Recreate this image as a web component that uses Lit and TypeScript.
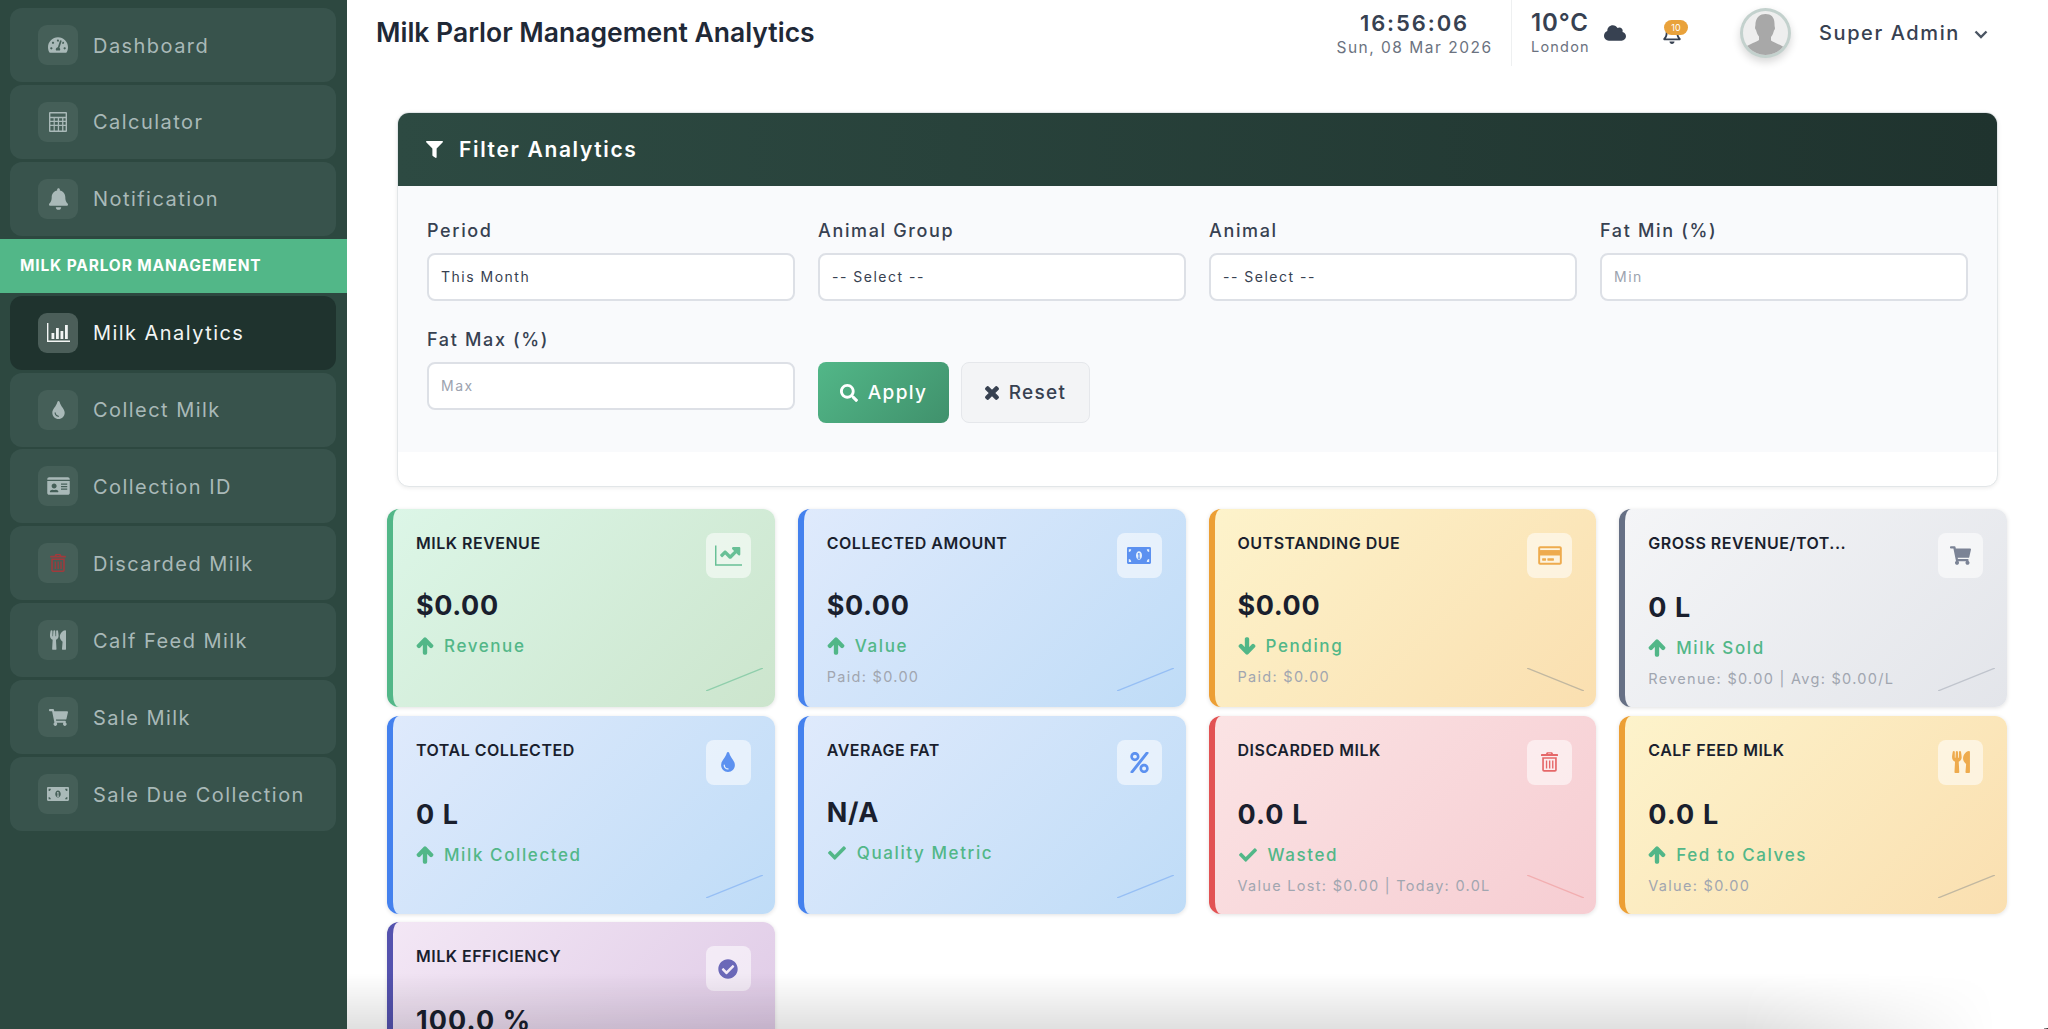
import { LitElement, html, css, svg } from "lit";
import { customElement } from "lit/decorators.js";

const P: Record<string, [string, any]> = {
  gauge: ["0 0 576 512", svg`<path d="M288 32C128.94 32 0 160.94 0 320c0 52.8 14.25 102.26 39.06 144.8 5.61 9.62 16.3 15.2 27.44 15.2h443c11.14 0 21.83-5.58 27.44-15.2C561.75 422.26 576 372.8 576 320c0-159.06-128.94-288-288-288zm0 64c14.71 0 26.58 10.13 30.32 23.65-1.11 2.26-2.64 4.23-3.45 6.67l-9.22 27.67c-5.13 3.49-10.97 6.01-17.64 6.01-17.67 0-32-14.33-32-32S270.33 96 288 96zM96 384c-17.67 0-32-14.33-32-32s14.33-32 32-32 32 14.33 32 32-14.33 32-32 32zm48-160c-17.67 0-32-14.33-32-32s14.33-32 32-32 32 14.33 32 32-14.33 32-32 32zm246.77-72.41l-61.33 184C343.13 347.33 352 364.54 352 384c0 11.72-3.38 22.55-8.88 32H232.88c-5.5-9.45-8.88-20.28-8.88-32 0-33.94 26.5-61.43 59.9-63.59l61.34-184.01c4.17-12.56 17.73-19.45 30.36-15.17 12.57 4.19 19.35 17.79 15.17 30.36zm14.66 57.2l15.52-46.55c3.47-1.29 7.13-2.23 11.05-2.23 17.67 0 32 14.33 32 32s-14.33 32-32 32c-11.38-.01-20.89-6.28-26.57-15.22zM480 384c-17.67 0-32-14.33-32-32s14.33-32 32-32 32 14.33 32 32-14.33 32-32 32z"/>`],
  calc: ["0 0 18 20", svg`<path fill-rule="evenodd" d="M1 0h16a1 1 0 0 1 1 1v18a1 1 0 0 1-1 1H1a1 1 0 0 1-1-1V1a1 1 0 0 1 1-1zm.4 1.4v3.4h15.2V1.4zm0 4.8v2.6h3.2V6.2zm4.4 0v2.6h3V6.2zm4.3 0v2.6h3V6.2zm4.3 0v2.6h2.2V6.2zM1.4 10v2.7h3.2V10zm4.4 0v2.7h3V10zm4.3 0v2.7h3V10zm4.3 0v2.7h2.2V10zM1.4 13.9v4.7h3.2v-4.7zm4.4 0v4.7h3v-4.7zm4.3 0v4.7h3v-4.7zm4.3 0v4.7h2.2v-4.7z"/>`],
  bell: ["0 0 448 512", svg`<path d="M224 512c35.32 0 63.97-28.65 63.97-64H160.03c0 35.35 28.65 64 63.97 64zm215.39-149.71c-19.32-20.76-55.47-51.99-55.47-154.29 0-77.7-54.48-139.9-127.94-155.16V32c0-17.67-14.32-32-31.98-32s-31.98 14.33-31.98 32v20.84C118.56 68.1 64.08 130.3 64.08 208c0 102.3-36.15 133.53-55.47 154.29-6 6.45-8.66 14.16-8.61 21.71.11 16.4 12.98 32 32.1 32h383.8c19.12 0 32-15.6 32.1-32 .05-7.55-2.61-15.27-8.61-21.71z"/>`],
  bars: ["0 0 23 19", svg`<path d="M0 0h1.4v17.4H23V19H0z"/><rect x="4.5" y="10" width="2.8" height="6"/><rect x="9" y="5" width="2.8" height="11"/><rect x="13.5" y="8" width="2.8" height="8"/><rect x="18" y="2" width="2.8" height="14"/>`],
  tint: ["0 0 352 512", svg`<path d="M205.22 22.09c-7.94-28.78-49.44-30.12-58.44 0C100.01 179.85 0 222.72 0 333.91 0 432.35 78.72 512 176 512s176-79.65 176-178.09c0-111.75-99.79-153.34-146.78-311.82zM176 448c-61.75 0-112-50.25-112-112 0-8.84 7.16-16 16-16s16 7.16 16 16c0 44.11 35.89 80 80 80 8.84 0 16 7.16 16 16s-7.16 16-16 16z"/>`],
  idcard: ["0 0 576 512", svg`<path d="M528 32H48C21.5 32 0 53.5 0 80v16h576V80c0-26.5-21.5-48-48-48zM0 432c0 26.5 21.5 48 48 48h480c26.5 0 48-21.5 48-48V128H0v304zm352-232c0-4.4 3.6-8 8-8h144c4.4 0 8 3.6 8 8v16c0 4.4-3.6 8-8 8H360c-4.4 0-8-3.6-8-8v-16zm0 64c0-4.4 3.6-8 8-8h144c4.4 0 8 3.6 8 8v16c0 4.4-3.6 8-8 8H360c-4.4 0-8-3.6-8-8v-16zm0 64c0-4.4 3.6-8 8-8h144c4.4 0 8 3.6 8 8v16c0 4.4-3.6 8-8 8H360c-4.4 0-8-3.6-8-8v-16zM176 192c35.3 0 64 28.7 64 64s-28.7 64-64 64-64-28.7-64-64 28.7-64 64-64zM67.1 396.2C75.5 370.5 99.6 352 128 352h8.2c12.3 5.1 25.7 8 39.8 8s27.6-2.9 39.8-8h8.2c28.4 0 52.5 18.5 60.9 44.2 3.2 9.9-5.2 19.8-15.6 19.8H82.7c-10.4 0-18.8-10-15.6-19.8z"/>`],
  trash: ["0 0 448 512", svg`<path fill-rule="evenodd" d="M32 128h384v336a48 48 0 0 1-48 48H80a48 48 0 0 1-48-48zm44 44v292a4 4 0 0 0 4 4h288a4 4 0 0 0 4-4V172zm52 44h36v208h-36zm82 0h36v208h-36zm82 0h36v208h-36zM16 48h112l26-48h140l26 48h112a16 16 0 0 1 16 16v32H0V64a16 16 0 0 1 16-16zm164 0h88l-10-18h-68z"/>`],
  utensils: ["0 0 416 512", svg`<path d="M207.9 15.2c.8 4.7 16.1 94.5 16.1 128.8 0 52.3-27.8 89.6-68.9 104.6L168 486.7c.7 13.7-10.2 25.3-24 25.3H80c-13.7 0-24.7-11.5-24-25.3l12.9-238.1C27.7 233.6 0 196.2 0 144 0 109.6 15.3 19.9 16.1 15.2 19.3-5.1 61.4-5.4 64 16.3v141.2c1.3 3.4 15.1 3.2 16 0 1.4-25.3 7.9-139.2 8-141.8 3.3-20.8 44.7-20.8 47.9 0 .2 2.7 6.6 116.5 8 141.8.9 3.2 14.8 3.4 16 0V16.3c2.6-21.6 44.8-21.4 48-1.1zm119.2 285.7l-15 185.1c-1.2 14 9.9 26 23.9 26h56c13.3 0 24-10.7 24-24V24c0-13.2-10.7-24-24-24-82.5 0-221.4 178.5-64.9 300.9z"/>`],
  cart: ["0 0 576 512", svg`<path d="M528.12 301.319l47.273-208C578.806 78.301 567.391 64 551.99 64H159.208l-9.166-44.81C147.758 8.021 137.93 0 126.529 0H24C10.745 0 0 10.745 0 24v16c0 13.255 10.745 24 24 24h69.883l70.248 343.435C147.325 417.1 136 435.222 136 456c0 30.928 25.072 56 56 56s56-25.072 56-56c0-15.674-6.447-29.835-16.824-40h209.647C430.447 426.165 424 440.326 424 456c0 30.928 25.072 56 56 56s56-25.072 56-56c0-22.172-12.888-41.332-31.579-50.405l5.517-24.276c3.413-15.018-8.002-29.319-23.403-29.319H218.117l-6.545-32h293.145c11.206 0 20.92-7.754 23.403-18.681z"/>`],
  money: ["0 64 640 384", svg`<path d="M608 64H32C14.33 64 0 78.33 0 96v320c0 17.67 14.33 32 32 32h576c17.67 0 32-14.33 32-32V96c0-17.67-14.33-32-32-32zM48 400v-64c35.35 0 64 28.65 64 64H48zm0-224v-64h64c0 35.35-28.65 64-64 64zm272 176c-44.19 0-80-42.99-80-96 0-53.02 35.82-96 80-96s80 42.98 80 96c0 53.03-35.83 96-80 96zm272 48h-64c0-35.35 28.65-64 64-64v64zm0-224c-35.35 0-64-28.65-64-64h64v64z"/><path d="M304 200h32v104h16v24h-64v-24h16v-72h-16v-16z"/>`],
  line: ["0 0 512 512", svg`<path d="M512 420H28V64H0v384h512zM464 96H345.94c-21.38 0-32.09 25.85-16.97 40.97l32.4 32.4L288 242.75l-73.37-73.37c-12.5-12.5-32.76-12.5-45.25 0l-68.69 68.69c-6.25 6.25-6.25 16.38 0 22.63l22.62 22.62c6.25 6.25 16.38 6.25 22.63 0L192 237.25l73.37 73.37c12.5 12.5 32.76 12.5 45.25 0l96-96 32.4 32.4c15.12 15.12 40.97 4.41 40.97-16.97V112c.01-8.84-7.16-16-15.99-16z"/>`],
  card: ["0 0 576 512", svg`<path d="M527.9 32H48.1C21.5 32 0 53.5 0 80v352c0 26.5 21.5 48 48.1 48h479.8c26.6 0 48.1-21.5 48.1-48V80c0-26.5-21.5-48-48.1-48zM54.1 80h467.8c3.3 0 6 2.7 6 6v42H48.1V86c0-3.3 2.7-6 6-6zm467.8 352H54.1c-3.3 0-6-2.7-6-6V256h479.8v170c0 3.3-2.7 6-6 6zM192 332v40c0 6.6-5.4 12-12 12h-72c-6.6 0-12-5.4-12-12v-40c0-6.6 5.4-12 12-12h72c6.6 0 12 5.4 12 12zm192 0v40c0 6.6-5.4 12-12 12H236c-6.6 0-12-5.4-12-12v-40c0-6.6 5.4-12 12-12h136c6.6 0 12 5.4 12 12z"/><rect x="48" y="128" width="480" height="64" />`],
  percent: ["0 0 448 512", svg`<path d="M112 224c61.9 0 112-50.1 112-112S173.9 0 112 0 0 50.1 0 112s50.1 112 112 112zm0-160c26.5 0 48 21.5 48 48s-21.5 48-48 48-48-21.5-48-48 21.5-48 48-48zm224 224c-61.9 0-112 50.1-112 112s50.1 112 112 112 112-50.1 112-112-50.1-112-112-112zm0 160c-26.5 0-48-21.5-48-48s21.5-48 48-48 48 21.5 48 48-21.5 48-48 48zM392 0h32c19 0 30 22 18 38L76 502c-5 6-12 10-20 10H24c-19 0-30-22-18-38L372 10c5-6 12-10 20-10z"/>`],
  ccheck: ["0 0 512 512", svg`<path d="M504 256c0 136.967-111.033 248-248 248S8 392.967 8 256 119.033 8 256 8s248 111.033 248 248zM227.314 387.314l184-184c6.248-6.248 6.248-16.379 0-22.627l-22.627-22.627c-6.248-6.249-16.379-6.249-22.628 0L216 308.118l-70.059-70.059c-6.248-6.248-16.379-6.248-22.628 0l-22.627 22.627c-6.248 6.248-6.248 16.379 0 22.627l104 104c6.249 6.249 16.379 6.249 22.628.001z"/>`],
  up: ["0 0 448 512", svg`<path stroke="currentColor" stroke-width="44" stroke-linejoin="round" d="M34.9 289.5l-22.2-22.2c-9.4-9.4-9.4-24.6 0-33.9L207 39c9.4-9.4 24.6-9.4 33.9 0l194.3 194.3c9.4 9.4 9.4 24.6 0 33.9L413 289.4c-9.5 9.5-25 9.3-34.3-.4L264 168.6V456c0 13.3-10.7 24-24 24h-32c-13.3 0-24-10.7-24-24V168.6L69.2 289.1c-9.3 9.8-24.8 10-34.3.4z"/>`],
  down: ["0 0 448 512", svg`<path stroke="currentColor" stroke-width="44" stroke-linejoin="round" d="M413.1 222.5l22.2 22.2c9.4 9.4 9.4 24.6 0 33.9L241 473c-9.4 9.4-24.6 9.4-33.9 0L12.7 278.6c-9.4-9.4-9.4-24.6 0-33.9l22.2-22.2c9.5-9.5 25-9.3 34.3.4L184 343.4V56c0-13.3 10.7-24 24-24h32c13.3 0 24 10.7 24 24v287.4l114.8-120.5c9.3-9.8 24.8-10 34.3-.4z"/>`],
  check: ["0 0 512 512", svg`<path d="M173.898 439.404l-166.4-166.4c-9.997-9.997-9.997-26.206 0-36.204l36.203-36.204c9.997-9.998 26.207-9.998 36.204 0L192 312.69 432.095 72.596c9.997-9.997 26.207-9.997 36.204 0l36.203 36.204c9.997 9.997 9.997 26.206 0 36.204l-294.4 294.401c-9.998 9.997-26.207 9.997-36.204-.001z"/>`],
  filter: ["0 0 512 512", svg`<path d="M487.976 0H24.028C2.71 0-8.047 25.866 7.058 40.971L192 225.941V432c0 7.831 3.821 15.17 10.237 19.662l80 55.98C298.02 518.69 320 507.493 320 487.98V225.941l184.947-184.97C520.021 25.896 509.338 0 487.976 0z"/>`],
  search: ["0 0 512 512", svg`<path d="M505 442.7L405.3 343c-4.5-4.5-10.6-7-17-7H372c27.6-35.3 44-79.7 44-128C416 93.1 322.9 0 208 0S0 93.1 0 208s93.1 208 208 208c48.3 0 92.7-16.4 128-44v16.3c0 6.4 2.5 12.5 7 17l99.7 99.7c9.4 9.4 24.6 9.4 33.9 0l28.3-28.3c9.4-9.4 9.4-24.6.1-34zM208 336c-70.7 0-128-57.2-128-128 0-70.7 57.2-128 128-128 70.7 0 128 57.2 128 128 0 70.7-57.2 128-128 128z"/>`],
  times: ["0 0 352 512", svg`<path stroke="currentColor" stroke-width="40" stroke-linejoin="round" d="M242.72 256l100.07-100.07c12.28-12.28 12.28-32.19 0-44.48l-22.24-22.24c-12.28-12.28-32.19-12.28-44.48 0L176 189.28 75.93 89.21c-12.28-12.28-32.19-12.28-44.48 0L9.21 111.45c-12.28 12.28-12.28 32.19 0 44.48L109.28 256 9.21 356.07c-12.28 12.28-12.28 32.19 0 44.48l22.24 22.24c12.28 12.28 32.2 12.28 44.48 0L176 322.72l100.07 100.07c12.28 12.28 32.2 12.28 44.48 0l22.24-22.24c12.28-12.28 12.28-32.19 0-44.48L242.72 256z"/>`],
  cloud: ["0 0 640 512", svg`<path d="M537.6 226.6c4.1-10.7 6.4-22.4 6.4-34.6 0-53-43-96-96-96-19.7 0-38.1 6-53.3 16.2C367 64.2 315.3 32 256 32c-88.4 0-160 71.6-160 160 0 2.7.1 5.4.2 8.1C40.2 219.8 0 273.2 0 336c0 79.5 64.5 144 144 144h368c70.7 0 128-57.3 128-128 0-61.9-44-113.6-102.4-125.4z"/>`],
  belloutline: ["0 0 448 512", svg`<path d="M224 512c35.32 0 63.97-28.65 63.97-64H160.03c0 35.35 28.65 64 63.97 64zm215.39-149.71c-19.32-20.76-55.47-51.99-55.47-154.29 0-77.7-54.48-139.9-127.94-155.16V32c0-17.67-14.32-32-31.98-32s-31.98 14.33-31.98 32v20.84C118.56 68.1 64.08 130.3 64.08 208c0 102.3-36.15 133.53-55.47 154.29-6 6.45-8.66 14.16-8.61 21.71.11 16.4 12.98 32 32.1 32h383.8c19.12 0 32-15.6 32.1-32 .05-7.55-2.61-15.27-8.61-21.71zM67.53 368c21.22-27.97 44.42-74.33 44.53-159.42 0-.2-.06-.38-.06-.58 0-61.86 50.14-112 112-112s112 50.14 112 112c0 .2-.06.38-.06.58.11 85.1 23.31 131.46 44.53 159.42H67.53z"/>`],
};

const ic = (n: string, w: number, h: number) => html`<svg class="ic" viewBox=${P[n][0]} style="width:${w}px;height:${h}px" fill="currentColor" preserveAspectRatio=${n === "money" ? "none" : "xMidYMid meet"}>${P[n][1]}</svg>`;

type Nav = { label: string; icon: string; w: number; h: number; active?: boolean; red?: boolean };
const NAV_TOP: Nav[] = [
  { label: "Dashboard", icon: "gauge", w: 20, h: 18 },
  { label: "Calculator", icon: "calc", w: 18, h: 20 },
  { label: "Notification", icon: "bell", w: 19, h: 22 },
];
const NAV_BOTTOM: Nav[] = [
  { label: "Milk Analytics", icon: "bars", w: 23, h: 19, active: true },
  { label: "Collect Milk", icon: "tint", w: 13, h: 18 },
  { label: "Collection ID", icon: "idcard", w: 23, h: 20 },
  { label: "Discarded Milk", icon: "trash", w: 16, h: 18, red: true },
  { label: "Calf Feed Milk", icon: "utensils", w: 16, h: 20 },
  { label: "Sale Milk", icon: "cart", w: 19, h: 17 },
  { label: "Sale Due Collection", icon: "money", w: 22, h: 14 },
];

type Stat = { t: string; v: string; tr?: string; ti?: string; sub?: string; kind: string; icon: string; iw: number; ih: number; flip?: boolean; tall?: boolean };
const STATS: Stat[] = [
  { t: "MILK REVENUE", v: "$0.00", tr: "Revenue", ti: "up", kind: "green", icon: "line", iw: 27, ih: 27 },
  { t: "COLLECTED AMOUNT", v: "$0.00", tr: "Value", ti: "up", sub: "Paid: $0.00", kind: "blue", icon: "money", iw: 24, ih: 17 },
  { t: "OUTSTANDING DUE", v: "$0.00", tr: "Pending", ti: "down", sub: "Paid: $0.00", kind: "amber", icon: "card", iw: 24, ih: 21, flip: true },
  { t: "GROSS REVENUE/TOT...", v: "0 L", tr: "Milk Sold", ti: "up", sub: "Revenue: $0.00 | Avg: $0.00/L", kind: "gray", icon: "cart", iw: 21, ih: 19, tall: true },
  { t: "TOTAL COLLECTED", v: "0 L", tr: "Milk Collected", ti: "up", kind: "blue", icon: "tint", iw: 14, ih: 20, tall: true },
  { t: "AVERAGE FAT", v: "N/A", tr: "Quality Metric", ti: "check", kind: "blue", icon: "percent", iw: 21, ih: 21 },
  { t: "DISCARDED MILK", v: "0.0 L", tr: "Wasted", ti: "check", sub: "Value Lost: $0.00 | Today: 0.0L", kind: "red", icon: "trash", iw: 17, ih: 20, flip: true, tall: true },
  { t: "CALF FEED MILK", v: "0.0 L", tr: "Fed to Calves", ti: "up", sub: "Value: $0.00", kind: "amber", icon: "utensils", iw: 18, ih: 22, tall: true },
  { t: "MILK EFFICIENCY", v: "100.0 %", kind: "purple", icon: "ccheck", iw: 20, ih: 20, tall: true },
];

@customElement("app-root")
export class AppRoot extends LitElement {
  static styles = css`
    :host { display: block; font-family: Inter, "Liberation Sans", sans-serif; }
    * { box-sizing: border-box; }
    .ic { display: block; flex: none; }
    .page { display: flex; width: 100%; height: 1029px; overflow: hidden; background: #fff; position: relative; }
    .side { width: 347px; flex: none; background: #2d4840; padding-top: 8px; display: flex; flex-direction: column; }
    .nav { margin: 0 11px 2.9px 10px; height: 74px; border-radius: 12px; background: #38534c; display: flex; align-items: center; padding-left: 28px; gap: 15px; color: #a9b9b8; font-size: 20px; font-weight: 400; letter-spacing: 1.45px; flex: none; }
    .nav span { position: relative; top: 0.5px; }
    .nav.active { background: #1f332e; color: #f2f5f4; }
    .nav-icon { width: 40px; height: 40px; border-radius: 9px; background: #455f58; display: flex; align-items: center; justify-content: center; }
    .nav.active .nav-icon { background: #4b5e59; }
    .nav-icon.red { color: #a13a3c; }
    .sec { height: 54px; background: #52b788; color: #fff; font-size: 15.5px; font-weight: 700; letter-spacing: 0.85px; display: flex; align-items: center; padding-left: 20px; margin-bottom: 3px; flex: none; }
    .main { flex: 1; min-width: 0; }
    .head { height: 66px; display: flex; align-items: center; padding-left: 29px; }
    .title { font-size: 26.5px; font-weight: 600; color: #1f2937; margin: 0; letter-spacing: 0; flex: 1; line-height: 66px; position: relative; top: -1px; }
    .clock { width: 165px; text-align: center; margin-right: 14px; height: 66px; display: flex; flex-direction: column; align-items: center; }
    .time { font-size: 22px; font-weight: 600; color: #374151; letter-spacing: 1.9px; line-height: 26px; margin-top: 10px; }
    .date { font-size: 15.5px; color: #6b7280; letter-spacing: 1.5px; line-height: 22px; margin-top: 1px; white-space: nowrap; }
    .weather { border-left: 1px solid #eef0f1; height: 66px; padding-left: 19px; display: flex; width: 153px; flex: none; }
    .wt { width: 73px; flex: none; }
    .temp { font-size: 24px; font-weight: 600; color: #374151; line-height: 26px; margin-top: 10px; letter-spacing: 0.9px; }
    .city { font-size: 14.5px; color: #6b7280; letter-spacing: 1.2px; line-height: 22px; margin-top: 0; }
    .cloud { color: #374151; margin-top: 24px; }
    .bell { width: 76px; flex: none; position: relative; height: 66px; color: #374151; }
    .bell .ic { position: absolute; left: -1px; top: 24px; }
    .badge { position: absolute; left: 0; top: 20px; width: 24px; height: 15px; background: #e9a23b; color: #fff; border-radius: 8px; font-size: 9px; line-height: 15px; text-align: center; }
    .avatar { width: 51px; height: 50px; border-radius: 50%; border: 3px solid #c3d1cd; background: #eee; box-shadow: 0 4px 8px rgba(0,0,0,.16); overflow: hidden; flex: none; margin-right: 28px; }
    .avatar svg { display: block; width: 100%; height: 100%; }
    .name { font-size: 20px; font-weight: 500; color: #374151; letter-spacing: 1.6px; width: 155px; flex: none; white-space: nowrap; }
    .chev { width: 74px; flex: none; color: #4b5563; }
    .filter { margin: 46px 50px 0 50px; border: 1px solid #e2e6e8; border-radius: 12px; height: 375px; box-shadow: 0 1px 4px rgba(0,0,0,.08); overflow: hidden; background: #fff; }
    .fh { height: 73px; background: linear-gradient(90deg, #2d4a42, #1f332e); color: #fff; display: flex; align-items: center; padding-left: 28px; gap: 16px; font-size: 21px; font-weight: 600; letter-spacing: 1.65px; }
    .fb { height: 266px; background: #f9fafc; padding: 30px 29px 0 29px; display: grid; grid-template-columns: repeat(4, 368px); column-gap: 23px; row-gap: 24px; align-content: start; }
    .fld label { display: block; font-size: 18px; font-weight: 500; color: #374151; letter-spacing: 1.65px; line-height: 30px; margin-bottom: 7px; }
    .inp { height: 48px; border: 2px solid #dde0e6; border-radius: 8px; background: #fff; padding: 0 0 2px 12px; display: flex; align-items: center; font-size: 14px; letter-spacing: 1.5px; color: #374151; }
    .inp.ph { color: #9ca3af; }
    .btns { display: flex; gap: 12px; grid-column: span 3; padding-top: 37px; }
    .btn { height: 61px; border-radius: 8px; display: flex; align-items: center; justify-content: center; gap: 10px; font-size: 19px; font-weight: 500; letter-spacing: 1.3px; }
    .apply { width: 131px; background: linear-gradient(135deg, #52b788, #40916c); color: #fff; }
    .reset { width: 129px; background: #f3f4f6; border: 1px solid #e5e7eb; color: #374151; }
    .stats { margin: 22px 41px 0 40px; display: grid; grid-template-columns: repeat(4, 1fr); gap: 8.5px 23px; grid-auto-rows: 198px; }
    .stat { position: relative; border-radius: 12px; border-left: 6px solid var(--a); background: linear-gradient(135deg, var(--b1), var(--b2)); box-shadow: 0 1px 4px rgba(0,0,0,.12); padding: 24px 24px 0 23px; }
    .stat.green { --a: #52b788; --b1: #dcf6e7; --b2: #cce5cd; --l: #52b788; }
    .stat.blue { --a: #4481ee; --b1: #dfeafc; --b2: #bfdcf7; --l: #6ba1f2; }
    .stat.amber { --a: #ec9f35; --b1: #fdf3cb; --b2: #fadfb0; --l: #8a8f8f; }
    .stat.gray { --a: #667085; --b1: #f4f5f7; --b2: #e3e5ea; --l: #9ca3af; }
    .stat.red { --a: #e25253; --b1: #fbe3e4; --b2: #f6cdd2; --l: #ee8d8d; }
    .stat.purple { --a: #5452ae; --b1: #f3e7f5; --b2: #dcc6e4; --l: #9a86c4; }
    .top { display: flex; justify-content: space-between; align-items: flex-start; height: 45px; }
    .st { font-size: 16px; font-weight: 600; color: #1a1f2e; letter-spacing: 0.5px; line-height: 20px; white-space: nowrap; }
    .si { width: 45px; height: 45px; border-radius: 8px; background: rgba(255,255,255,.55); color: var(--a); display: flex; align-items: center; justify-content: center; }
    .si .ic { opacity: .85; }
    .sv { font-size: 27px; font-weight: 700; color: #1a1f2e; letter-spacing: 0.6px; line-height: 34px; margin-top: 11px; white-space: nowrap; }
    .stat.tall .sv { margin-top: 13px; letter-spacing: 1.1px; }
    .tr { display: flex; align-items: center; gap: 10px; color: #52b788; font-size: 17px; font-weight: 500; letter-spacing: 1.6px; line-height: 24px; margin-top: 11px; }
    .sub { font-size: 14.5px; color: #a1a6b0; letter-spacing: 1.3px; line-height: 20px; margin-top: 9px; white-space: nowrap; }
    .deco { position: absolute; right: 12px; bottom: 16px; width: 57px; height: 23px; }
    .deco line { stroke: var(--l); stroke-width: 1.3; opacity: .5; }
    .fade { position: absolute; left: 347px; right: 0; bottom: 0; height: 56px; background: linear-gradient(180deg, rgba(0,0,0,0), rgba(0,0,0,.12)); pointer-events: none; -webkit-mask-image: linear-gradient(90deg, #000 82%, transparent 97%); mask-image: linear-gradient(90deg, #000 82%, transparent 97%); }
    .corner { position: absolute; right: 0; bottom: 0; width: 4px; height: 14px; background: radial-gradient(circle at 0 0, transparent 13px, #2a2a2a 14px); }
  `;

  private navItem(n: Nav) {
    return html`<div class="nav ${n.active ? "active" : ""}"><div class="nav-icon ${n.red ? "red" : ""}">${ic(n.icon, n.w, n.h)}</div><span>${n.label}</span></div>`;
  }

  private statCard(s: Stat) {
    return html`<div class="stat ${s.kind} ${s.tall ? "tall" : ""}">
      <div class="top"><div class="st">${s.t}</div><div class="si">${ic(s.icon, s.iw, s.ih)}</div></div>
      <div class="sv">${s.v}</div>
      ${s.tr ? html`<div class="tr">${ic(s.ti!, s.ti === "check" ? 20 : 18, 18)}<span>${s.tr}</span></div>` : ""}
      ${s.sub ? html`<div class="sub">${s.sub}</div>` : ""}
      <svg class="deco" viewBox="0 0 57 23">${s.flip ? svg`<line x1="0" y1="0" x2="57" y2="23"/>` : svg`<line x1="0" y1="23" x2="57" y2="0"/>`}</svg>
    </div>`;
  }

  render() {
    return html`<div class="page">
      <aside class="side">
        ${NAV_TOP.map((n) => this.navItem(n))}
        <div class="sec">MILK PARLOR MANAGEMENT</div>
        ${NAV_BOTTOM.map((n) => this.navItem(n))}
      </aside>
      <main class="main">
        <header class="head">
          <h1 class="title">Milk Parlor Management Analytics</h1>
          <div class="clock"><div class="time">16:56:06</div><div class="date">Sun, 08 Mar 2026</div></div>
          <div class="weather"><div class="wt"><div class="temp">10°C</div><div class="city">London</div></div><div class="cloud">${ic("cloud", 22, 18)}</div></div>
          <div class="bell">${ic("belloutline", 18, 20)}<div class="badge">10</div></div>
          <div class="avatar"><svg viewBox="0 0 45 44"><path fill="#a8a8a8" d="M22.5 3c5.5 0 9 3 9 9.500 0 2 .2 3 .4 4 .3 1.500-.3 2.500-.9 3-.6 2.500-1.700 5-3 6.500v3.500c2.500 2.200 9 3.500 14 7.500C40 42 33 48 22.500 48S5 42 2 36.500c5-4 11.500-5.300 14-7.500v-3.500c-1.300-1.500-2.400-4-3-6.500-.6-.5-1.200-1.500-.9-3 .2-1 .4-2 .4-4C13.500 6 17 3 22.500 3z"/></svg></div>
          <div class="name">Super Admin</div>
          <div class="chev"><svg width="14" height="9" viewBox="0 0 14 9" fill="none" stroke="currentColor" stroke-width="2.4"><path d="M1.5 1.5 7 7l5.500-5.500"/></svg></div>
        </header>
        <section class="filter">
          <div class="fh">${ic("filter", 17, 17)}<span>Filter Analytics</span></div>
          <div class="fb">
            <div class="fld"><label>Period</label><div class="inp">This Month</div></div>
            <div class="fld"><label>Animal Group</label><div class="inp">-- Select --</div></div>
            <div class="fld"><label>Animal</label><div class="inp">-- Select --</div></div>
            <div class="fld"><label>Fat Min (%)</label><div class="inp ph">Min</div></div>
            <div class="fld"><label>Fat Max (%)</label><div class="inp ph">Max</div></div>
            <div class="btns">
              <div class="btn apply">${ic("search", 18, 18)}<span>Apply</span></div>
              <div class="btn reset">${ic("times", 14, 18)}<span>Reset</span></div>
            </div>
          </div>
        </section>
        <section class="stats">${STATS.map((s) => this.statCard(s))}</section>
      </main>
      <div class="fade"></div>
      <div class="corner"></div>
    </div>`;
  }
}
